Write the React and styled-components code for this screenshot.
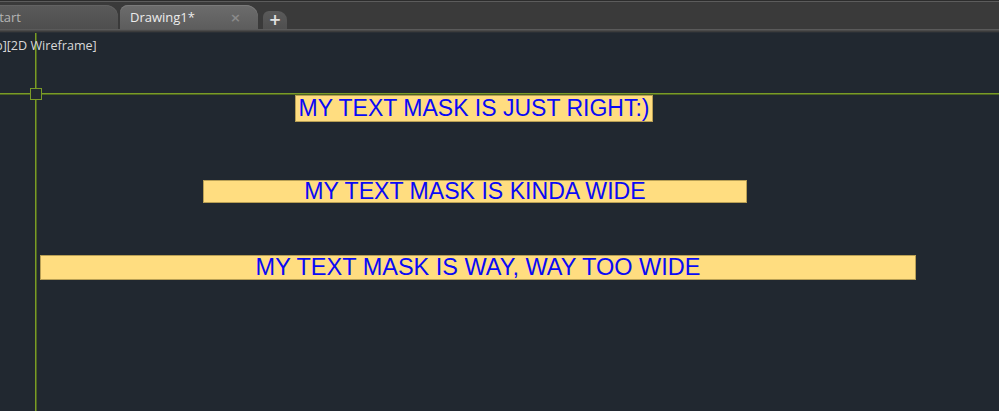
import React from "react";
import styled, { createGlobalStyle } from "styled-components";

const Global = createGlobalStyle`
  html, body {
    margin: 0;
    padding: 0;
    background: #212830;
    overflow: hidden;
  }
  * { box-sizing: border-box; }
`;

const Shell = styled.div`
  width: 999px;
  height: 411px;
  display: flex;
  flex-direction: column;
  background: #212830;
  overflow: hidden;
`;

/* ---------- file tabs ---------- */
const TabBar = styled.div`
  height: 33px;
  flex: none;
  display: flex;
  flex-direction: column;
  background: linear-gradient(#2c2c2c 0 1px, #5c5c5c 1px 2px, #3a3a3a 2px);
`;

const TabRow = styled.div`
  height: 29px;
  display: flex;
  align-items: flex-end;
  gap: 2px;
  overflow: hidden;
`;

const Rail = styled.div`
  height: 4px;
  background: linear-gradient(#5a5a5a 0 1px, #4a4a4a 1px 2px, #3c3c3c 2px 3px, #2a2f35 3px);
`;

const Tab = styled.div`
  height: 24px;
  width: ${(p) => p.$width}px;
  margin-left: ${(p) => p.$offset || 0}px;
  padding: 0 17px 0 10px;
  display: flex;
  align-items: center;
  justify-content: space-between;
  border-radius: 8px 12px 0 0;
  background: ${(p) =>
    p.$active
      ? "linear-gradient(#6c6c6c, #5d5d5d)"
      : "linear-gradient(#5a5a5a, #4e4e4e)"};
  box-shadow: inset 0 1px 0 ${(p) => (p.$active ? "#7a7a7a" : "#626262")};
  font-family: "Open Sans", "Noto Sans", sans-serif;
  font-size: 13px;
  color: ${(p) => (p.$active ? "#ececec" : "#b4b4b4")};
  white-space: nowrap;
`;

const Close = styled.span`
  font-family: "DejaVu Sans", sans-serif;
  font-size: 13px;
  font-weight: bold;
  color: #8a8a8a;
  line-height: 1;
`;

const AddTab = styled.div`
  width: 24px;
  height: 18px;
  margin-left: 3px;
  border-radius: 6px 9px 0 0;
  background: linear-gradient(#5a5a5a, #4f4f4f);
  display: flex;
  align-items: center;
  justify-content: center;
  color: #e2e2e2;
  font-family: "DejaVu Sans", sans-serif;
  font-weight: bold;
  font-size: 15px;
  line-height: 1;
`;

/* ---------- drawing area ---------- */
const Canvas = styled.div`
  position: relative;
  flex: 1;
  overflow: hidden;
  background: #212830;
`;

const ViewLabel = styled.div`
  position: relative;
  z-index: 2;
  padding-top: 4px;
  height: 24px;
  overflow: hidden;
  font-family: "Open Sans", "Noto Sans", sans-serif;
  font-size: 12.6px;
  line-height: 18px;
  color: #d8d8d8;
  white-space: nowrap;
`;

const LabelText = styled.span`
  display: inline-block;
  margin-left: -36px;
`;

const CrossV = styled.div`
  position: absolute;
  left: 35px;
  top: 0;
  bottom: 0;
  width: 1px;
  background: #7a9b27;
  box-shadow: 1px 0 0 #4d6420;
`;

const CrossH = styled.div`
  position: absolute;
  left: 0;
  right: 0;
  top: 60px;
  height: 1px;
  background: #7a9b27;
  box-shadow: 0 1px 0 #4d6420;
`;

const Pickbox = styled.div`
  position: absolute;
  left: 30px;
  top: 55px;
  width: 12px;
  height: 12px;
  border: 1px solid #7a9b27;
  background: #212830;
`;

/* mtext entity with background mask */
const TextMask = styled.div`
  position: absolute;
  left: ${(p) => p.$x}px;
  top: ${(p) => p.$y}px;
  width: ${(p) => p.$w}px;
  height: ${(p) => p.$h}px;
  display: flex;
  align-items: center;
  justify-content: center;
  background: #ffdd80;
  border: 1px solid #b89f55;
  font-family: "Liberation Sans", Arial, sans-serif;
  font-size: ${(p) => p.$size}px;
  line-height: 1;
  color: #0a0af5;
  white-space: nowrap;
`;

const entities = [
  { text: "MY TEXT MASK IS JUST RIGHT:)", x: 295, y: 62, w: 358, h: 27, size: 23 },
  { text: "MY TEXT MASK IS KINDA WIDE", x: 203, y: 147, w: 544, h: 23, size: 23.1 },
  { text: "MY TEXT MASK IS WAY, WAY TOO WIDE", x: 40, y: 222, w: 876, h: 25, size: 23.5 },
];

export default function App() {
  return (
    <>
      <Global />
      <Shell>
        <TabBar>
          <TabRow>
            <Tab $width={136} $offset={-18}>
              <span>Start</span>
            </Tab>
            <Tab $active $width={138}>
              <span>Drawing1*</span>
              <Close>×</Close>
            </Tab>
            <AddTab>+</AddTab>
          </TabRow>
          <Rail />
        </TabBar>
        <Canvas>
          <ViewLabel>
            <LabelText>[-][Top][2D Wireframe]</LabelText>
          </ViewLabel>
          <CrossV />
          <CrossH />
          <Pickbox />
          {entities.map((e) => (
            <TextMask key={e.text} $x={e.x} $y={e.y} $w={e.w} $h={e.h} $size={e.size}>
              {e.text}
            </TextMask>
          ))}
        </Canvas>
      </Shell>
    </>
  );
}
